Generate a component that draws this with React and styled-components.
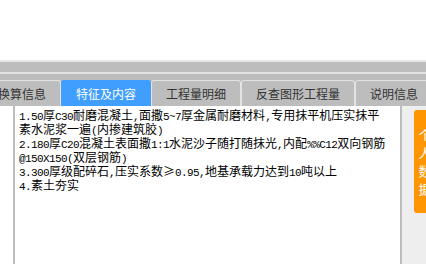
import React from "react";
import styled, { createGlobalStyle } from "styled-components";

const GlobalStyle = createGlobalStyle`
  html, body {
    margin: 0;
    padding: 0;
    background: #ffffff;
    overflow: hidden;
  }
  * {
    box-sizing: border-box;
  }
`;

const Page = styled.div`
  width: 426px;
  height: 264px;
  display: flex;
  flex-direction: column;
  overflow: hidden;
  font-family: "Noto Sans CJK SC", "Noto Sans", sans-serif;
`;

const TopSpace = styled.div`
  height: 60px;
  flex: none;
`;

const Toolbar = styled.div`
  height: 14px;
  flex: none;
  background: #bdbdbd;
  border-top: 2px solid #e8e8e8;
  border-bottom: 2px solid #e2e2e2;
`;

const TabBar = styled.div`
  height: 32px;
  flex: none;
  background: #bdbdbd;
  display: flex;
  align-items: flex-end;
  overflow: hidden;
`;

const TabList = styled.div`
  display: flex;
  margin-left: -17px;
  flex: none;
`;

const Tab = styled.div`
  flex: none;
  height: 26px;
  padding: 0 14px;
  display: flex;
  align-items: center;
  border: 1px solid #e3e3e3;
  border-bottom: none;
  border-radius: 3px 3px 0 0;
  font-size: 12px;
  white-space: nowrap;
  color: ${(p) => (p.$active ? "#ffffff" : "#333333")};
  background: ${(p) => (p.$active ? "#409eff" : "#bdbdbd")};
  border-color: ${(p) => (p.$active ? "#409eff" : "#e3e3e3")};
`;

const Body = styled.div`
  flex: 1;
  display: flex;
  min-height: 0;
`;

const Gutter = styled.div`
  width: 13px;
  flex: none;
  background: #ffffff;
`;

const Editor = styled.div`
  flex: 1;
  min-width: 0;
  background: #ffffff;
  border-left: 2px solid #bdbdbd;
  border-right: 2px solid #bdbdbd;
  padding: 2px 4px;
  overflow: hidden;
  font-family: "Noto Sans CJK SC", sans-serif;
  font-size: 12px;
  color: #000000;
`;

const Line = styled.div`
  height: 14px;
  line-height: 14px;
  white-space: pre;
`;

// half-width latin runs, 6px per character like the original bitmap font
const Latin = styled.span`
  font-family: "Liberation Mono", "DejaVu Sans Mono", monospace;
  font-size: 11px;
  letter-spacing: -0.6px;
  line-height: 1;
`;

const SidePanel = styled.div`
  width: 24px;
  flex: none;
  background: #eeeeee;
  padding: 4px 0 0 12px;
  overflow: hidden;
`;

const SideButton = styled.div`
  width: 22px;
  height: 103px;
  background: #ff9500;
  border-radius: 3px;
  color: #ffffff;
  display: flex;
  flex-direction: column;
  align-items: center;
  justify-content: center;
  font-size: 13px;
  line-height: 18px;
`;

const tabs = ["换算信息", "特征及内容", "工程量明细", "反查图形工程量", "说明信息"];

const lines = [
  "1.50厚C30耐磨混凝土,面撒5~7厚金属耐磨材料,专用抹平机压实抹平",
  "素水泥浆一遍(内掺建筑胶)",
  "2.180厚C20混凝土表面撒1:1水泥沙子随打随抹光,内配%%C12双向钢筋",
  "@150X150(双层钢筋)",
  "3.300厚级配碎石,压实系数≥0.95,地基承载力达到10吨以上",
  "4.素土夯实",
];

const TextLine = ({ text }) => (
  <Line>
    {text.split(/([\x20-\x7e]+)/).map((part, i) =>
      /^[\x20-\x7e]+$/.test(part) ? <Latin key={i}>{part}</Latin> : part
    )}
  </Line>
);

export default function App() {
  return (
    <>
      <GlobalStyle />
      <Page>
        <TopSpace />
        <Toolbar />
        <TabBar>
          <TabList>
            {tabs.map((t) => (
              <Tab key={t} $active={t === "特征及内容"}>
                {t}
              </Tab>
            ))}
          </TabList>
        </TabBar>
        <Body>
          <Gutter />
          <Editor>
            {lines.map((l, i) => (
              <TextLine key={i} text={l} />
            ))}
          </Editor>
          <SidePanel>
            <SideButton>
              {"个人数据".split("").map((c) => (
                <span key={c}>{c}</span>
              ))}
            </SideButton>
          </SidePanel>
        </Body>
      </Page>
    </>
  );
}
